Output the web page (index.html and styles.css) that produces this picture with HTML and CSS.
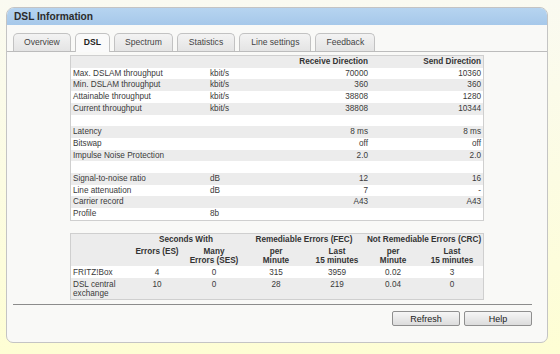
FILE: index.html
```html
<!DOCTYPE html>
<html lang="en">
<head>
<meta charset="UTF-8">
<title>DSL Information</title>
<link rel="stylesheet" href="styles.css">
</head>
<body>

<div class="box">
  <div class="box-head">DSL Information</div>

  <div class="tabs">
    <div class="tab">Overview</div>
    <div class="tab active">DSL</div>
    <div class="tab">Spectrum</div>
    <div class="tab">Statistics</div>
    <div class="tab">Line settings</div>
    <div class="tab">Feedback</div>
  </div>

  <div class="content">
    <table class="info">
      <colgroup>
        <col style="width: 137px">
        <col style="width: 60px">
        <col style="width: 100px">
        <col style="width: 115px">
      </colgroup>
      <tr>
        <th></th><th></th><th class="num">Receive Direction</th><th class="num">Send Direction</th>
      </tr>
      <tr><td>Max. DSLAM throughput</td><td>kbit/s</td><td class="num">70000</td><td class="num">10360</td></tr>
      <tr><td>Min. DSLAM throughput</td><td>kbit/s</td><td class="num">360</td><td class="num">360</td></tr>
      <tr><td>Attainable throughput</td><td>kbit/s</td><td class="num">38808</td><td class="num">1280</td></tr>
      <tr><td>Current throughput</td><td>kbit/s</td><td class="num">38808</td><td class="num">10344</td></tr>
      <tr><td>&nbsp;</td><td></td><td></td><td></td></tr>
      <tr><td>Latency</td><td></td><td class="num">8 ms</td><td class="num">8 ms</td></tr>
      <tr><td>Bitswap</td><td></td><td class="num">off</td><td class="num">off</td></tr>
      <tr><td>Impulse Noise Protection</td><td></td><td class="num">2.0</td><td class="num">2.0</td></tr>
      <tr><td>&nbsp;</td><td></td><td></td><td></td></tr>
      <tr><td>Signal-to-noise ratio</td><td>dB</td><td class="num">12</td><td class="num">16</td></tr>
      <tr><td>Line attenuation</td><td>dB</td><td class="num">7</td><td class="num">-</td></tr>
      <tr><td>Carrier record</td><td></td><td class="num">A43</td><td class="num">A43</td></tr>
      <tr><td>Profile</td><td>8b</td><td></td><td></td></tr>
    </table>

    <table class="errors">
      <colgroup>
        <col style="width: 58px">
        <col style="width: 56px">
        <col style="width: 58px">
        <col style="width: 66px">
        <col style="width: 56px">
        <col style="width: 56px">
        <col style="width: 62px">
      </colgroup>
      <tr>
        <th></th>
        <th colspan="2">Seconds With</th>
        <th colspan="2">Remediable Errors (FEC)</th>
        <th colspan="2">Not Remediable Errors (CRC)</th>
      </tr>
      <tr class="sub">
        <th></th>
        <th>Errors (ES)<br>&nbsp;</th>
        <th>Many<br>Errors (SES)</th>
        <th>per<br>Minute</th>
        <th>Last<br>15 minutes</th>
        <th>per<br>Minute</th>
        <th>Last<br>15 minutes</th>
      </tr>
      <tr class="light">
        <td class="label">FRITZ!Box</td><td>4</td><td>0</td><td>315</td><td>3959</td><td>0.02</td><td>3</td>
      </tr>
      <tr class="tall">
        <td class="label">DSL central exchange</td><td>10</td><td>0</td><td>28</td><td>219</td><td>0.04</td><td>0</td>
      </tr>
    </table>
  </div>

  <div class="footer">
    <button class="btn">Refresh</button>
    <button class="btn">Help</button>
  </div>
</div>

</body>
</html>
```

FILE: styles.css
```css
* {
  margin: 0;
  padding: 0;
  box-sizing: border-box;
}

body {
  min-height: 354px;
  padding: 7px 0 0 6px;
  background: linear-gradient(to bottom, #fafaf1 0%, #fefed4 100%);
  font-family: "Liberation Sans", Arial, sans-serif;
  color: #333;
}

.box {
  width: 542px;
  height: 336px;
  background: #f9f9f7;
  border: 1px solid #c4c4c4;
  border-radius: 8px 8px 7px 7px;
}

.box-head {
  height: 17px;
  padding-left: 7px;
  line-height: 17px;
  font-size: 10.2px;
  font-weight: bold;
  color: #2b2b2b;
  background: linear-gradient(to bottom, #b6d4f0, #a6c8ea);
  border-radius: 7px 7px 0 0;
}

.tabs {
  display: flex;
  gap: 4px;
  padding: 8px 0 0 6px;
  border-bottom: 1px solid #bcbcbc;
}

.tab {
  height: 18px;
  padding: 0 10px;
  line-height: 17px;
  font-size: 8.6px;
  color: #444;
  background: linear-gradient(to bottom, #f3f3f3, #e4e4e4);
  border: 1px solid #c2c2c2;
  border-bottom: none;
  border-radius: 5px 5px 0 0;
}

.tab.active {
  height: 19px;
  margin-bottom: -1px;
  padding: 0 8px;
  font-weight: bold;
  color: #222;
  background: #fafafa;
}

.tabs .tab:nth-child(4) { padding: 0 11px; }
.tabs .tab:nth-child(5) { padding: 0 11px; }

.content {
  padding: 3px 0 0 63px;
}

table {
  width: 414px;
  border-spacing: 0;
  table-layout: fixed;
  border: 1px solid #cfcfcf;
  font-size: 8.2px;
  color: #3a3a3a;
}

.info td,
.info th {
  height: 11.7px;
  line-height: 11.7px;
  padding: 0 0 0 2px;
  text-align: left;
  white-space: nowrap;
}

.info th {
  font-weight: bold;
  color: #333;
}

.info .num {
  text-align: right;
  padding: 0;
}

.info td.num:last-child,
.info th.num:last-child {
  padding-right: 2px;
}

.info tr:nth-child(odd) {
  background: #ececec;
}

.info tr:nth-child(even) {
  background: #fff;
}

.errors {
  margin-top: 12px;
  background: #ececec;
}

.errors th,
.errors td {
  padding: 1.5px 1px;
  line-height: 9px;
  text-align: center;
}

.errors th {
  font-weight: bold;
  color: #333;
  white-space: nowrap;
}

.errors .sub th {
  padding-top: 1px;
}

.errors .label {
  text-align: left;
  padding-left: 2px;
}

.errors .light {
  background: #fff;
}

.errors .tall td {
  vertical-align: top;
  padding: 2px 1px 1px;
}

.errors .tall .label {
  padding-left: 2px;
}

.footer {
  display: flex;
  justify-content: flex-end;
  gap: 4px;
  margin: 4px 15px 0 6px;
  padding-top: 6px;
  border-top: 1px solid #8c8c8c;
}

.btn {
  width: 68px;
  height: 15px;
  font-family: "Liberation Sans", Arial, sans-serif;
  font-size: 9px;
  color: #222;
  background: linear-gradient(to bottom, #f6f6f6, #dcdcdc);
  border: 1px solid #8f8f8f;
  border-radius: 2px;
}
```
